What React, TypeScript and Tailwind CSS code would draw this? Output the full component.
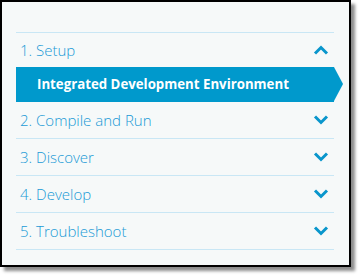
const steps = [
  { n: 1, label: "Setup", open: true },
  { n: 2, label: "Compile and Run" },
  { n: 3, label: "Discover" },
  { n: 4, label: "Develop" },
  { n: 5, label: "Troubleshoot" },
];

function Chevron({ up }: { up?: boolean }) {
  return (
    <svg width="16" height="10" viewBox="0 0 16 10" className="mr-[5px]">
      <polyline
        points={up ? "2,8.5 8,2.5 14,8.5" : "2,1.5 8,7.5 14,1.5"}
        fill="none"
        stroke="#0996cc"
        strokeWidth="3"
      />
    </svg>
  );
}

export default function App() {
  return (
    <div className="min-h-screen bg-white">
      <div className="w-[351px] h-[267px] border-2 border-black bg-[#f6f9f9] shadow-[4px_4px_3px_rgba(0,0,0,0.45)] pt-[30px] pl-[14px]">
        <div className="w-[318px] border-t border-[#c9e7f5]" style={{ fontFamily: "'Open Sans', sans-serif" }}>
          {steps.map((s) => (
            <div key={s.n}>
              <div
                className={`flex items-center justify-between pl-[4px] text-[15px] font-light text-[#1a9ad6] ${
                  s.open ? "h-[34px]" : "h-[37px] border-b border-[#c9e7f5]"
                }`}
              >
                <span>
                  {s.n}. {s.label}
                </span>
                <Chevron up={s.open} />
              </div>
              {s.open && (
                <div className="relative flex items-center h-[35px] bg-[#0099cc] pl-[21px] text-[13.25px] font-bold text-white">
                  Integrated Development Environment
                  <div className="absolute right-[-9px] top-0 w-0 h-0 border-y-[17.5px] border-y-transparent border-l-[9px] border-l-[#0099cc]" />
                </div>
              )}
            </div>
          ))}
        </div>
      </div>
    </div>
  );
}
